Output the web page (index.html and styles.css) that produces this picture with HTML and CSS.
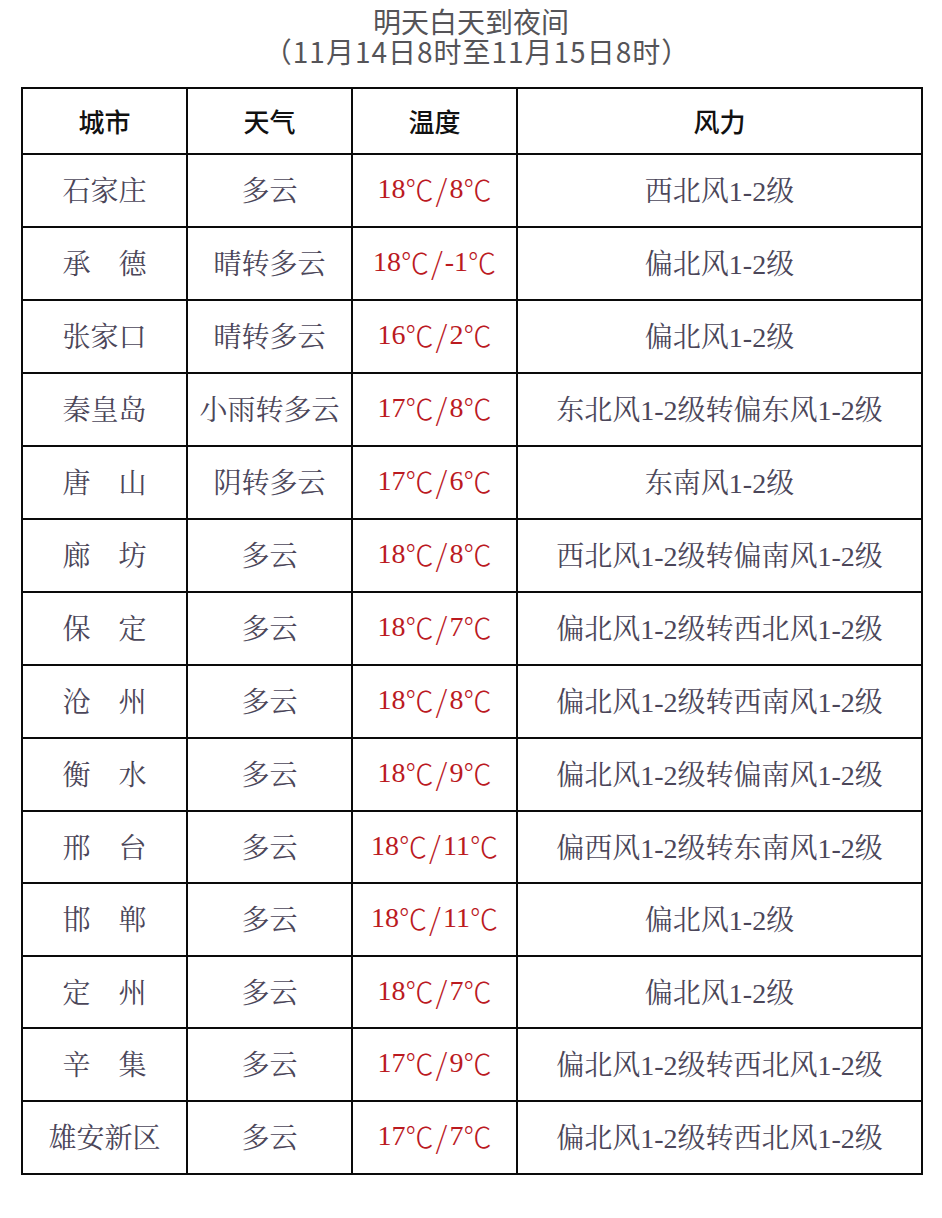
FILE: index.html
```html
<!DOCTYPE html>
<html lang="zh-CN">
<head>
<meta charset="utf-8">
<title>明天白天到夜间</title>
<link rel="stylesheet" href="styles.css">
</head>
<body>
<header class="title">
  <div class="title-line">明天白天到夜间</div>
  <div class="title-line sub">（11月14日8时至11月15日8时）</div>
</header>
<div class="table">
  <div class="cell head">城市</div>
  <div class="cell head">天气</div>
  <div class="cell head">温度</div>
  <div class="cell head">风力</div>

  <div class="cell">石家庄</div><div class="cell">多云</div><div class="cell temp">18<span class="dc">℃</span><span class="sl">/</span>8<span class="dc">℃</span></div><div class="cell">西北风1-2级</div>
  <div class="cell">承　德</div><div class="cell">晴转多云</div><div class="cell temp">18<span class="dc">℃</span><span class="sl">/</span>-1<span class="dc">℃</span></div><div class="cell">偏北风1-2级</div>
  <div class="cell">张家口</div><div class="cell">晴转多云</div><div class="cell temp">16<span class="dc">℃</span><span class="sl">/</span>2<span class="dc">℃</span></div><div class="cell">偏北风1-2级</div>
  <div class="cell">秦皇岛</div><div class="cell">小雨转多云</div><div class="cell temp">17<span class="dc">℃</span><span class="sl">/</span>8<span class="dc">℃</span></div><div class="cell">东北风1-2级转偏东风1-2级</div>
  <div class="cell">唐　山</div><div class="cell">阴转多云</div><div class="cell temp">17<span class="dc">℃</span><span class="sl">/</span>6<span class="dc">℃</span></div><div class="cell">东南风1-2级</div>
  <div class="cell">廊　坊</div><div class="cell">多云</div><div class="cell temp">18<span class="dc">℃</span><span class="sl">/</span>8<span class="dc">℃</span></div><div class="cell">西北风1-2级转偏南风1-2级</div>
  <div class="cell">保　定</div><div class="cell">多云</div><div class="cell temp">18<span class="dc">℃</span><span class="sl">/</span>7<span class="dc">℃</span></div><div class="cell">偏北风1-2级转西北风1-2级</div>
  <div class="cell">沧　州</div><div class="cell">多云</div><div class="cell temp">18<span class="dc">℃</span><span class="sl">/</span>8<span class="dc">℃</span></div><div class="cell">偏北风1-2级转西南风1-2级</div>
  <div class="cell">衡　水</div><div class="cell">多云</div><div class="cell temp">18<span class="dc">℃</span><span class="sl">/</span>9<span class="dc">℃</span></div><div class="cell">偏北风1-2级转偏南风1-2级</div>
  <div class="cell">邢　台</div><div class="cell">多云</div><div class="cell temp">18<span class="dc">℃</span><span class="sl">/</span>11<span class="dc">℃</span></div><div class="cell">偏西风1-2级转东南风1-2级</div>
  <div class="cell">邯　郸</div><div class="cell">多云</div><div class="cell temp">18<span class="dc">℃</span><span class="sl">/</span>11<span class="dc">℃</span></div><div class="cell">偏北风1-2级</div>
  <div class="cell">定　州</div><div class="cell">多云</div><div class="cell temp">18<span class="dc">℃</span><span class="sl">/</span>7<span class="dc">℃</span></div><div class="cell">偏北风1-2级</div>
  <div class="cell">辛　集</div><div class="cell">多云</div><div class="cell temp">17<span class="dc">℃</span><span class="sl">/</span>9<span class="dc">℃</span></div><div class="cell">偏北风1-2级转西北风1-2级</div>
  <div class="cell">雄安新区</div><div class="cell">多云</div><div class="cell temp">17<span class="dc">℃</span><span class="sl">/</span>7<span class="dc">℃</span></div><div class="cell">偏北风1-2级转西北风1-2级</div>
</div>
</body>
</html>
```
FILE: styles.css
```css
html, body {
  margin: 0;
  padding: 0;
  background: #ffffff;
}

.title {
  padding-top: 6px;
  text-align: center;
  font-family: "Noto Sans CJK SC", sans-serif;
  font-size: 28px;
  line-height: 30px;
  color: #555458;
}

.title-line.sub {
  letter-spacing: 1px;
  padding-left: 12px;
}

.table {
  display: grid;
  grid-template-columns: 165px 165px 165px 405px;
  grid-template-rows: 66px 73px 73px 73px 73px 73px 73px 73px 73px 73px 72px 73px 72px 73px 73px;
  width: fit-content;
  margin: 21px 0 0 21px;
  border-top: 2px solid #0a0a0a;
  border-left: 2px solid #0a0a0a;
}

.cell {
  box-sizing: border-box;
  border-right: 2px solid #0a0a0a;
  border-bottom: 2px solid #0a0a0a;
  display: flex;
  align-items: center;
  justify-content: center;
  padding-bottom: 3px;
  font-family: "Liberation Serif", "Noto Serif CJK SC", "Noto Sans CJK SC", serif;
  font-size: 28px;
  color: #4b4659;
  white-space: nowrap;
}

.cell.head {
  padding-bottom: 2px;
  font-family: "Noto Sans CJK SC", sans-serif;
  font-size: 26px;
  font-weight: 500;
  color: #111111;
}

.cell.temp {
  color: #bb1a1f;
  font-size: 28px;
}

.dc {
  font-family: "Noto Sans CJK SC", sans-serif;
  font-weight: 300;
}

.sl {
  font-family: "Noto Sans CJK SC", sans-serif;
  font-weight: 300;
  font-size: 30px;
  margin: 0 2px;
}
```
